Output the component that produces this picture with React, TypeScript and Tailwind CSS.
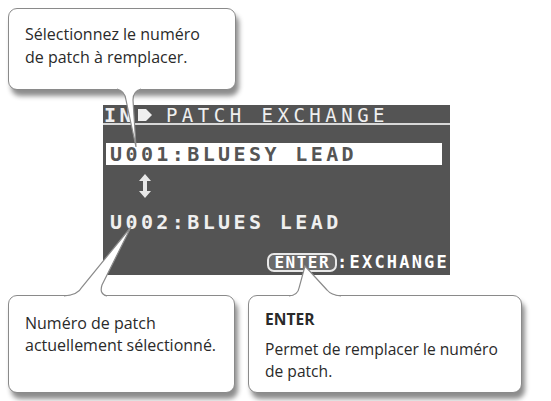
import React from 'react';

const bodyFont = { fontFamily: '"Open Sans", "Noto Sans", sans-serif' };

function Callout({ className, children }: { className: string; children: React.ReactNode }) {
  return (
    <div
      className={`rounded-[9px] border border-[#8a8a8a] bg-white text-[#2a2a2a] shadow-[3px_6px_5px_rgba(0,0,0,0.45)] ${className}`}
      style={bodyFont}
    >
      {children}
    </div>
  );
}

function UpDownArrow() {
  return (
    <svg width="14" height="26" viewBox="0 0 14 26" className="ml-[35px]">
      <path d="M7 1 L13 8 H9 V18 H13 L7 25 L1 18 H5 V8 H1 Z" fill="#e8e8e8" />
    </svg>
  );
}

export default function App() {
  const lcdText = 'font-["DejaVu_Sans_Mono",monospace] font-bold text-[20px] leading-none tracking-[3.4px]';

  return (
    <div className="relative w-[551px] h-[401px] overflow-hidden bg-white">
      {/* top note */}
      <Callout className="ml-[8px] mt-[8px] w-[228px] h-[82px] pl-[16px] pt-[14px] text-[16px] leading-[23px]">
        Sélectionnez le numéro
        <br />
        de patch à remplacer.
      </Callout>

      {/* lcd screen */}
      <div className="ml-[103px] mt-[15px] w-[347px] h-[170px] bg-[#545454] flex flex-col text-[#efefef]">
        <div className="h-[20px] flex items-center gap-[2px] pl-[1px] pt-[2px] border-b-2 border-[#d8d8d8]">
          <span className={`${lcdText} text-[17px] tracking-[1px]`}>IN</span>
          <svg width="16" height="14" viewBox="0 0 16 14">
            <path d="M1 1 H9 L15 7 L9 13 H1 Z" fill="#efefef" />
          </svg>
          <span className="font-['DejaVu_Sans_Mono',monospace] text-[19px] leading-none tracking-[4.5px] ml-[11px]">
            PATCH EXCHANGE
          </span>
        </div>
        <div className="mt-[18px] ml-[3px] w-[336px] h-[22px] bg-white flex items-center pl-[4px]">
          <span className={`${lcdText} text-[#555555]`}>U001:BLUESY LEAD</span>
        </div>
        <div className="mt-[8px]">
          <UpDownArrow />
        </div>
        <div className={`${lcdText} ml-[7px] mt-[13px]`}>U002:BLUES LEAD</div>
        <div className="mt-auto mb-[3px] mr-[1px] flex items-center justify-end">
          <span className="h-[19px] px-[5px] flex items-center rounded-[7px] border-2 border-[#e8e8e8] bg-[#6a6a6a] font-['DejaVu_Sans_Mono',monospace] text-[16px] font-bold leading-none tracking-[1.5px] text-white">
            ENTER
          </span>
          <span className="font-['DejaVu_Sans_Mono',monospace] font-bold text-[17px] leading-none tracking-[2.2px] text-white">
            :EXCHANGE
          </span>
        </div>
      </div>

      {/* bottom notes */}
      <div className="mt-[20px] flex gap-[13px] pl-[8px]">
        <Callout className="w-[227px] h-[98px] pl-[16px] pt-[16px] text-[16px] leading-[22px]">
          Numéro de patch
          <br />
          actuellement sélectionné.
        </Callout>
        <Callout className="w-[274px] h-[98px] pl-[16px] pt-[12px] text-[15.6px]">
          <div className="font-bold leading-[22px]">ENTER</div>
          <div className="mt-[8px] leading-[22px]">
            Permet de remplacer le numéro
            <br />
            de patch.
          </div>
        </Callout>
      </div>

      {/* callout tails */}
      <svg className="absolute inset-0 pointer-events-none" width="551" height="401" viewBox="0 0 551 401">
        <g fill="#ffffff">
          <path d="M117 89 Q125 91 126 100 L136 147 L133 100 Q133 91 141 89 Z" />
          <path d="M64 296.5 Q78 295 82 287 L131 227 L102 285 Q99 294 107 296.5 Z" />
          <path d="M289 296.5 Q298 295 299 288 L305 266 L327 290 Q331 295 341 296.5 Z" />
        </g>
        <g fill="none" stroke="#8a8a8a" strokeWidth="1.2">
          <path d="M117 89 Q125 91 126 100 L136 147 L133 100 Q133 91 141 89" />
          <path d="M64 296 Q78 295 82 287 L131 227 L102 285 Q99 294 107 296" />
          <path d="M289 296 Q298 295 299 288 L305 266 L327 290 Q331 295 341 296" />
        </g>
      </svg>
    </div>
  );
}
